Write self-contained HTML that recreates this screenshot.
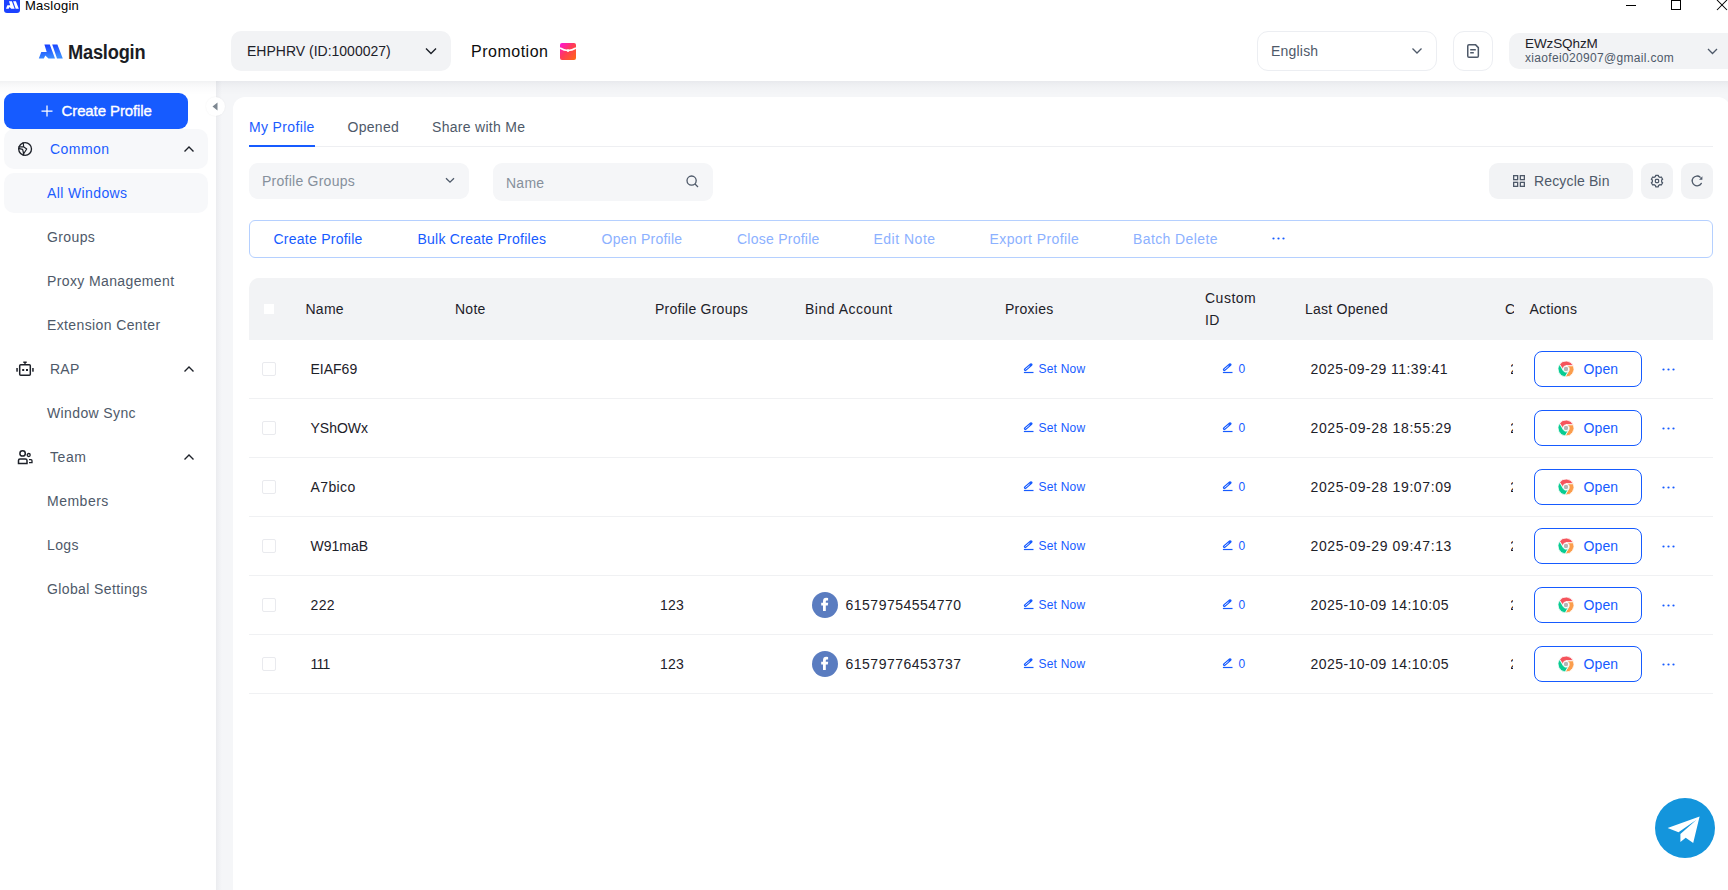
<!DOCTYPE html>
<html><head><meta charset="utf-8">
<style>
*{box-sizing:border-box;margin:0;padding:0}
html,body{width:1728px;height:890px;overflow:hidden;background:#fff;font-family:"Liberation Sans",sans-serif;color:#1d2129}
.a{position:absolute}
.t{position:absolute;white-space:nowrap;line-height:1}
svg{position:absolute;overflow:visible}
#content{left:216px;top:81px;width:1512px;height:809px;background:#f5f6f8}
#shl{left:216px;top:81px;width:6px;height:809px;background:linear-gradient(90deg,#ebecef 0px,#eff0f3 2px,rgba(245,246,248,0) 6px)}
#sht{left:0;top:81px;width:1728px;height:14px;background:linear-gradient(180deg,rgba(20,30,60,0.06) 0px,rgba(20,30,60,0.035) 3px,rgba(20,30,60,0.015) 7px,rgba(20,30,60,0) 14px)}
#card{left:233px;top:97px;width:1497px;height:820px;background:#fff;border-radius:12px}
#hdr{left:0;top:0;width:1728px;height:81px;background:#fff}
#side{left:0;top:81px;width:216px;height:809px;background:#fff}
.nav{position:absolute;left:4px;width:204px;height:40px;border-radius:10px}
.nav .t{font-size:14px;color:#4e5969;letter-spacing:0.25px}
.sel{background:#f7f8fa}
</style></head><body>
<div id="content" class="a"></div>
<div id="shl" class="a"></div>
<div id="side" class="a"></div>
<div id="hdr" class="a"></div>
<div id="card" class="a"></div>
<div id="sht" class="a"></div>

<!-- title bar -->
<div class="a" style="left:4px;top:-3px;width:16px;height:16px;border-radius:3px;background:#1c42ff"></div>
<svg style="left:0;top:0" width="24" height="14" viewBox="0 0 24 14"><g transform="translate(3.97,-1.25) scale(0.533)"><path d="M3.8 18.6 L6.3 12 L11.7 12 L9.4 4.6 L14.8 4.6 L20 18.6 L13.5 18.6 L10.3 15.6 L8.8 18.6 Z M17.2 4.6 L22.4 4.6 L27.8 18.6 L22 18.6 Z" fill="#fff"/></g></svg>
<div class="t" style="left:25px;top:-1px;font-size:13px;letter-spacing:0.25px;color:#000">Maslogin</div>
<div class="a" style="left:1626px;top:5px;width:10px;height:1px;background:#000"></div>
<div class="a" style="left:1671px;top:0px;width:10px;height:10px;border:1px solid #000"></div>
<svg style="left:1717px;top:-0.3px" width="11" height="11" viewBox="0 0 11 11"><path d="M0 0L10 10M10 0L0 10" stroke="#000" stroke-width="1.05"/></svg>

<!-- logo -->
<svg style="left:35px;top:40px" width="32" height="24" viewBox="0 0 32 24">
<defs><linearGradient id="lg" x1="0" y1="0" x2="0.3" y2="1"><stop offset="0" stop-color="#1436ff"/><stop offset="1" stop-color="#3a8cff"/></linearGradient></defs>
<path d="M3.8 18.6 L6.3 12 L11.7 12 L9.4 4.6 L14.8 4.6 L20 18.6 L13.5 18.6 L10.3 15.6 L8.8 18.6 Z M17.2 4.6 L22.4 4.6 L27.8 18.6 L22 18.6 Z" fill="url(#lg)"/></svg>
<div class="t" style="left:68px;top:42px;font-size:20px;font-weight:bold;letter-spacing:-0.2px;color:#1b1d24;transform:scaleX(0.91);transform-origin:0 0">Maslogin</div>

<!-- account dropdown -->
<div class="a" style="left:231px;top:31px;width:220px;height:40px;border-radius:10px;background:#f2f3f5"></div>
<div class="t" style="left:247px;top:44px;font-size:14px;color:#1d2129">EHPHRV (ID:1000027)</div>
<svg style="left:425px;top:47px" width="12" height="8" viewBox="0 0 12 8"><path d="M1 1.5L6 6.5L11 1.5" fill="none" stroke="#1d2129" stroke-width="1.4"/></svg>
<div class="t" style="left:471px;top:43.5px;font-size:16px;letter-spacing:0.5px;color:#0d0d0d">Promotion</div>
<svg style="left:560px;top:43px" width="16" height="17" viewBox="0 0 16 17">
<defs><linearGradient id="pg" x1="0" y1="0" x2="1" y2="1"><stop offset="0" stop-color="#ff10e0"/><stop offset="0.45" stop-color="#ff3a5a"/><stop offset="1" stop-color="#ff6a10"/></linearGradient></defs>
<rect x="0" y="0" width="16" height="17" rx="2" fill="url(#pg)"/><path d="M0 5 Q8 10 16 5" fill="none" stroke="#fff" stroke-width="1.6"/><circle cx="8" cy="7.6" r="1.3" fill="#fff"/></svg>

<!-- right header -->
<div class="a" style="left:1257px;top:31px;width:180px;height:40px;border-radius:11px;border:1px solid #eceef2"></div>
<div class="t" style="left:1271px;top:44px;font-size:14px;letter-spacing:0.2px;color:#4e5969">English</div>
<svg style="left:1411px;top:47px" width="12" height="8" viewBox="0 0 12 8"><path d="M1.5 1.5L6 6L10.5 1.5" fill="none" stroke="#4e5969" stroke-width="1.3"/></svg>
<div class="a" style="left:1453px;top:31px;width:40px;height:40px;border-radius:11px;border:1px solid #eceef2"></div>
<svg style="left:1466px;top:44px" width="14" height="15" viewBox="0 0 14 15"><path d="M1.75 2 Q1.75 0.65 3 0.65 H9.4 L12.35 3.6 V12.1 Q12.35 13.35 11.1 13.35 H3 Q1.75 13.35 1.75 12.1 Z" fill="none" stroke="#4e5969" stroke-width="1.5" stroke-linejoin="round"/><path d="M4.2 5.8H9.8 M4.2 8.7H7.8" stroke="#4e5969" stroke-width="1.6"/></svg>
<div class="a" style="left:1509px;top:33px;width:240px;height:36px;border-radius:10px;background:#f2f3f5"></div>
<div class="t" style="left:1525px;top:37.3px;font-size:13.5px;letter-spacing:-0.1px;color:#1d2129">EWzSQhzM</div>
<div class="t" style="left:1525px;top:51.5px;font-size:12px;letter-spacing:0.33px;color:#4e5969">xiaofei020907@gmail.com</div>
<svg style="left:1707px;top:48px" width="11" height="7" viewBox="0 0 11 7"><path d="M1 1L5.5 5.5L10 1" fill="none" stroke="#4e5969" stroke-width="1.3"/></svg>

<!-- sidebar -->
<div class="a" style="left:4px;top:93px;width:184px;height:36px;border-radius:9px;background:#165bff"></div>
<svg style="left:41px;top:105px" width="12" height="12" viewBox="0 0 12 12"><path d="M6 0.5V11.5M0.5 6H11.5" stroke="#fff" stroke-width="1.25"/></svg>
<div class="t" style="left:61.5px;top:103px;font-size:15px;color:#fff;letter-spacing:-0.1px;-webkit-text-stroke:0.35px #fff">Create Profile</div>
<div class="a" style="left:206px;top:97px;width:19px;height:19px;border-radius:50%;background:#fff;box-shadow:0 0 2px rgba(0,0,0,0.06)"></div>
<svg style="left:212px;top:101.5px" width="6" height="9" viewBox="0 0 6 9"><path d="M5.5 0.5V8.5L0.5 4.5Z" fill="#7d8791"/></svg>

<div class="nav sel" style="top:129px"></div>
<svg style="left:17px;top:141px" width="16" height="16" viewBox="0 0 16 16"><circle cx="8.1" cy="8" r="6.4" fill="none" stroke="#1d2129" stroke-width="1.35"/><path d="M6.1 1.2 L6.6 5.3 M1.2 6 L6.2 5.6 L9.7 8 L6.8 12.5 L6.3 14.6 M1.3 7.3 L5.6 8.3 L6.4 11.5 L6.3 14.6" fill="none" stroke="#1d2129" stroke-width="1.2" stroke-linejoin="round"/></svg>
<div class="t" style="left:50px;top:142px;font-size:14px;color:#1b5cff;letter-spacing:0.45px">Common</div>
<svg style="left:183px;top:145px" width="12" height="8" viewBox="0 0 12 8"><path d="M1.5 6.5L6 2L10.5 6.5" fill="none" stroke="#1d2129" stroke-width="1.4"/></svg>

<div class="nav sel" style="top:173px"></div>
<div class="t" style="left:47px;top:186px;font-size:14px;color:#1b5cff;letter-spacing:0.38px">All Windows</div>
<div class="t" style="left:47px;top:230px;font-size:14px;color:#4e5969;letter-spacing:0.38px">Groups</div>
<div class="t" style="left:47px;top:274px;font-size:14px;color:#4e5969;letter-spacing:0.38px">Proxy Management</div>
<div class="t" style="left:47px;top:318px;font-size:14px;color:#4e5969;letter-spacing:0.38px">Extension Center</div>
<svg style="left:15px;top:361px" width="20" height="16" viewBox="0 0 20 16"><rect x="4.7" y="3.8" width="10.6" height="10.4" rx="1" fill="none" stroke="#1d2129" stroke-width="1.5"/><path d="M8.3 1.2H11.7 M10 1.2V3.5" stroke="#1d2129" stroke-width="1.4"/><rect x="1.3" y="7" width="1.5" height="3.7" fill="#1d2129"/><rect x="17.2" y="7" width="1.5" height="3.7" fill="#1d2129"/><rect x="7.2" y="8" width="2" height="2" fill="#1d2129"/><rect x="11" y="8" width="2" height="2" fill="#1d2129"/></svg>
<div class="t" style="left:50px;top:362px;font-size:14px;color:#4e5969;letter-spacing:0.25px">RAP</div>
<svg style="left:183px;top:365px" width="12" height="8" viewBox="0 0 12 8"><path d="M1.5 6.5L6 2L10.5 6.5" fill="none" stroke="#1d2129" stroke-width="1.4"/></svg>
<div class="t" style="left:47px;top:406px;font-size:14px;color:#4e5969;letter-spacing:0.38px">Window Sync</div>
<svg style="left:15px;top:449px" width="20" height="16" viewBox="0 0 20 16"><circle cx="7.6" cy="4.4" r="2.7" fill="none" stroke="#1d2129" stroke-width="1.5"/><circle cx="13.7" cy="6" r="1.5" fill="none" stroke="#1d2129" stroke-width="1.3"/><path d="M3.5 14.6V11.5Q3.5 9.9 5 9.9H10.4Q12 9.9 12 11.5V14.6Z" fill="none" stroke="#1d2129" stroke-width="1.5"/><path d="M14 10.7H16Q17 10.7 17 11.8V13.6H14" fill="none" stroke="#1d2129" stroke-width="1.3"/></svg>
<div class="t" style="left:50px;top:450px;font-size:14px;color:#4e5969;letter-spacing:0.6px">Team</div>
<svg style="left:183px;top:453px" width="12" height="8" viewBox="0 0 12 8"><path d="M1.5 6.5L6 2L10.5 6.5" fill="none" stroke="#1d2129" stroke-width="1.4"/></svg>
<div class="t" style="left:47px;top:494px;font-size:14px;color:#4e5969;letter-spacing:0.5px">Members</div>
<div class="t" style="left:47px;top:538px;font-size:14px;color:#4e5969;letter-spacing:0.38px">Logs</div>
<div class="t" style="left:47px;top:582px;font-size:14px;color:#4e5969;letter-spacing:0.38px">Global Settings</div>

<!-- tabs -->
<div class="t" style="left:249px;top:120px;font-size:14px;color:#1b5cff;letter-spacing:0.35px">My Profile</div>
<div class="t" style="left:347.5px;top:120px;font-size:14px;color:#4e5969;letter-spacing:0.3px">Opened</div>
<div class="t" style="left:432px;top:120px;font-size:14px;color:#4e5969;letter-spacing:0.3px">Share with Me</div>
<div class="a" style="left:249px;top:146px;width:1464px;height:1px;background:#eeeff2"></div>
<div class="a" style="left:249px;top:145px;width:66px;height:2px;background:#165bff"></div>

<!-- filters -->
<div class="a" style="left:249px;top:163px;width:220px;height:36px;border-radius:9px;background:#f5f6f8"></div>
<div class="t" style="left:262px;top:174px;font-size:14px;color:#86909c;letter-spacing:0.25px">Profile Groups</div>
<svg style="left:445px;top:177px" width="10" height="7" viewBox="0 0 10 7"><path d="M1 1.2L5 5.2L9 1.2" fill="none" stroke="#4e5969" stroke-width="1.3"/></svg>
<div class="a" style="left:493px;top:163px;width:220px;height:38px;border-radius:9px;background:#f5f6f8"></div>
<div class="t" style="left:506px;top:175.5px;font-size:14px;color:#86909c;letter-spacing:0.25px">Name</div>
<svg style="left:686px;top:175px" width="13" height="13" viewBox="0 0 13 13"><circle cx="5.6" cy="5.6" r="4.6" fill="none" stroke="#4e5969" stroke-width="1.3"/><path d="M9 9L12 12" stroke="#4e5969" stroke-width="1.3"/></svg>

<div class="a" style="left:1489px;top:163px;width:144px;height:36px;border-radius:9px;background:#f2f3f5"></div>
<svg style="left:1513px;top:175px" width="12" height="12" viewBox="0 0 12 12"><g fill="none" stroke="#4e5969" stroke-width="1.3"><rect x="0.65" y="0.65" width="4" height="4"/><rect x="7.35" y="0.65" width="4" height="4"/><rect x="0.65" y="7.35" width="4" height="4"/><rect x="7.35" y="7.35" width="4" height="4"/></g></svg>
<div class="t" style="left:1534px;top:174px;font-size:14px;color:#4e5969;letter-spacing:0.15px">Recycle Bin</div>
<div class="a" style="left:1641px;top:163px;width:32px;height:36px;border-radius:9px;background:#f2f3f5"></div>
<svg style="left:1650px;top:174px" width="14" height="14" viewBox="0 0 14 14"><path d="M4.65 2.93 L5.47 2.56 L5.67 1.25 L8.33 1.25 L8.53 2.56 L9.35 2.93 L10.08 3.45 L11.31 2.98 L12.64 5.28 L11.61 6.10 L11.70 7.00 L11.61 7.90 L12.64 8.72 L11.31 11.02 L10.08 10.55 L9.35 11.07 L8.53 11.44 L8.33 12.75 L5.67 12.75 L5.47 11.44 L4.65 11.07 L3.92 10.55 L2.69 11.02 L1.36 8.72 L2.39 7.90 L2.30 7.00 L2.39 6.10 L1.36 5.28 L2.69 2.98 L3.92 3.45Z" fill="none" stroke="#4e5969" stroke-width="1.25" stroke-linejoin="round"/><rect x="5.4" y="5.4" width="3.2" height="3.2" rx="0.8" fill="none" stroke="#4e5969" stroke-width="1.25"/></svg>
<div class="a" style="left:1681px;top:163px;width:32px;height:36px;border-radius:9px;background:#f2f3f5"></div>
<svg style="left:1690px;top:174px" width="14" height="14" viewBox="0 0 14 14"><path d="M10.25 3.15 A4.9 4.9 0 1 0 11.34 9.35" fill="none" stroke="#4e5969" stroke-width="1.3" stroke-linecap="round"/><path d="M12.4 2.3 L12.4 5.7 L9.0 5.7Z" fill="#4e5969"/></svg>

<!-- toolbar -->
<div class="a" style="left:249px;top:220px;width:1464px;height:38px;border-radius:5px;border:1px solid #b5d0ff;border-radius:6px"></div>
<div class="t" style="left:273.5px;top:232px;font-size:14px;color:#165bff;letter-spacing:0.25px">Create Profile</div>
<div class="t" style="left:417.5px;top:232px;font-size:14px;color:#165bff;letter-spacing:0.25px">Bulk Create Profiles</div>
<div class="t" style="left:601.5px;top:232px;font-size:14px;color:#8cb1ff;letter-spacing:0.25px">Open Profile</div>
<div class="t" style="left:737px;top:232px;font-size:14px;color:#8cb1ff;letter-spacing:0.25px">Close Profile</div>
<div class="t" style="left:873.5px;top:232px;font-size:14px;color:#8cb1ff;letter-spacing:0.5px">Edit Note</div>
<div class="t" style="left:989.5px;top:232px;font-size:14px;color:#8cb1ff;letter-spacing:0.4px">Export Profile</div>
<div class="t" style="left:1133px;top:232px;font-size:14px;color:#8cb1ff;letter-spacing:0.4px">Batch Delete</div>
<svg style="left:1272px;top:237px" width="13" height="3" viewBox="0 0 13 3"><circle cx="1.5" cy="1.5" r="1.1" fill="#165bff"/><circle cx="6.5" cy="1.5" r="1.1" fill="#165bff"/><circle cx="11.5" cy="1.5" r="1.1" fill="#165bff"/></svg>

<!-- table header -->
<div class="a" style="left:249px;top:278px;width:1464px;height:62px;border-radius:10px 10px 0 0;background:#f2f3f5"></div>
<div class="a" style="left:264px;top:304px;width:10px;height:10px;background:#fff"></div>
<div class="t" style="left:305.5px;top:302.35px;font-size:14px;color:#1d2129;letter-spacing:0.25px">Name</div>
<div class="t" style="left:455px;top:302.35px;font-size:14px;color:#1d2129;letter-spacing:0.25px">Note</div>
<div class="t" style="left:655px;top:302.35px;font-size:14px;color:#1d2129;letter-spacing:0.25px">Profile Groups</div>
<div class="t" style="left:805px;top:302.35px;font-size:14px;color:#1d2129;letter-spacing:0.5px">Bind Account</div>
<div class="t" style="left:1005px;top:302.35px;font-size:14px;color:#1d2129;letter-spacing:0.25px">Proxies</div>
<div class="t" style="left:1305px;top:302.35px;font-size:14px;color:#1d2129;letter-spacing:0.25px">Last Opened</div>
<div class="t" style="left:1529.5px;top:302.35px;font-size:14px;color:#1d2129;letter-spacing:0.25px">Actions</div>
<div class="t" style="left:1205px;top:290.8px;font-size:14px;color:#1d2129;letter-spacing:0.5px">Custom</div>
<div class="t" style="left:1205px;top:313px;font-size:14px;color:#1d2129;letter-spacing:0.25px">ID</div>
<div class="a" style="left:1504px;top:290px;width:10px;height:30px;overflow:hidden"><div class="t" style="left:1px;top:12.35px;font-size:14px;color:#1d2129;letter-spacing:0.25px">C</div>
</div>
<div class="a" style="left:249px;top:398px;width:1464px;height:1px;background:#f0f1f3"></div>
<div class="a" style="left:262px;top:362px;width:14px;height:14px;border-radius:2px;border:1px solid #e9eaee;background:#fff"></div>
<div class="t" style="left:310.5px;top:362.05px;font-size:14px;color:#1d2129;letter-spacing:0px">EIAF69</div>
<svg style="left:1022.5px;top:363px" width="11" height="11" viewBox="0 0 11 11"><path d="M2.3 6.6 L8.1 1.7" stroke="#165bff" stroke-width="2.9" stroke-linecap="round"/><path d="M2.4 6.5 L6.6 3" stroke="#fff" stroke-width="0.9"/><path d="M0.9 9.5 H10.5" stroke="#165bff" stroke-width="1.2"/></svg>
<div class="t" style="left:1038.5px;top:362.64px;font-size:12px;color:#165bff;letter-spacing:0.2px">Set Now</div>
<svg style="left:1222px;top:363px" width="11" height="11" viewBox="0 0 11 11"><path d="M2.3 6.6 L8.1 1.7" stroke="#165bff" stroke-width="2.9" stroke-linecap="round"/><path d="M2.4 6.5 L6.6 3" stroke="#fff" stroke-width="0.9"/><path d="M0.9 9.5 H10.5" stroke="#165bff" stroke-width="1.2"/></svg>
<div class="t" style="left:1238.5px;top:362.64px;font-size:12px;color:#165bff;letter-spacing:0px">0</div>
<div class="t" style="left:1310.5px;top:362.05px;font-size:14px;color:#1d2129;letter-spacing:0.45px">2025-09-29 11:39:41</div>
<div class="a" style="left:1510.8px;top:359px;width:2.2px;height:20px;overflow:hidden"><div class="t" style="left:-0.8px;top:3.05px;font-size:14px;color:#1d2129;letter-spacing:0.25px">2</div>
</div>
<div class="a" style="left:1534px;top:351px;width:108px;height:36px;border-radius:8px;border:1px solid #165bff;background:#fff"></div>
<svg style="left:1558px;top:361px" width="16" height="16" viewBox="0 0 16 16"><g stroke="#fff" stroke-width="0.8"><path d="M1.562 3.251 A8 8 0 0 1 15.332 4.797 L8 4.8 A3.2 3.2 0 0 0 5.229 9.6 Z" fill="#f5545c"/><path d="M15.332 4.797 A8 8 0 0 1 7.108 15.95 L10.771 9.6 A3.2 3.2 0 0 0 8 4.8 Z" fill="#fb9d4c"/><path d="M7.108 15.95 A8 8 0 0 1 1.562 3.251 L5.229 9.6 A3.2 3.2 0 0 0 10.771 9.6 Z" fill="#08cc92"/></g><circle cx="8" cy="8" r="2.2" fill="#b5b5b5"/></svg>
<div class="t" style="left:1583.5px;top:362.05px;font-size:14px;color:#165bff;letter-spacing:0.1px">Open</div>
<svg style="left:1661.5px;top:367.5px" width="13" height="3" viewBox="0 0 13 3"><circle cx="1.5" cy="1.5" r="1.1" fill="#165bff"/><circle cx="6.5" cy="1.5" r="1.1" fill="#165bff"/><circle cx="11.5" cy="1.5" r="1.1" fill="#165bff"/></svg>
<div class="a" style="left:249px;top:457px;width:1464px;height:1px;background:#f0f1f3"></div>
<div class="a" style="left:262px;top:421px;width:14px;height:14px;border-radius:2px;border:1px solid #e9eaee;background:#fff"></div>
<div class="t" style="left:310.5px;top:421.05px;font-size:14px;color:#1d2129;letter-spacing:0px">YShOWx</div>
<svg style="left:1022.5px;top:422px" width="11" height="11" viewBox="0 0 11 11"><path d="M2.3 6.6 L8.1 1.7" stroke="#165bff" stroke-width="2.9" stroke-linecap="round"/><path d="M2.4 6.5 L6.6 3" stroke="#fff" stroke-width="0.9"/><path d="M0.9 9.5 H10.5" stroke="#165bff" stroke-width="1.2"/></svg>
<div class="t" style="left:1038.5px;top:421.64px;font-size:12px;color:#165bff;letter-spacing:0.2px">Set Now</div>
<svg style="left:1222px;top:422px" width="11" height="11" viewBox="0 0 11 11"><path d="M2.3 6.6 L8.1 1.7" stroke="#165bff" stroke-width="2.9" stroke-linecap="round"/><path d="M2.4 6.5 L6.6 3" stroke="#fff" stroke-width="0.9"/><path d="M0.9 9.5 H10.5" stroke="#165bff" stroke-width="1.2"/></svg>
<div class="t" style="left:1238.5px;top:421.64px;font-size:12px;color:#165bff;letter-spacing:0px">0</div>
<div class="t" style="left:1310.5px;top:421.05px;font-size:14px;color:#1d2129;letter-spacing:0.6px">2025-09-28 18:55:29</div>
<div class="a" style="left:1510.8px;top:418px;width:2.2px;height:20px;overflow:hidden"><div class="t" style="left:-0.8px;top:3.05px;font-size:14px;color:#1d2129;letter-spacing:0.25px">2</div>
</div>
<div class="a" style="left:1534px;top:410px;width:108px;height:36px;border-radius:8px;border:1px solid #165bff;background:#fff"></div>
<svg style="left:1558px;top:420px" width="16" height="16" viewBox="0 0 16 16"><g stroke="#fff" stroke-width="0.8"><path d="M1.562 3.251 A8 8 0 0 1 15.332 4.797 L8 4.8 A3.2 3.2 0 0 0 5.229 9.6 Z" fill="#f5545c"/><path d="M15.332 4.797 A8 8 0 0 1 7.108 15.95 L10.771 9.6 A3.2 3.2 0 0 0 8 4.8 Z" fill="#fb9d4c"/><path d="M7.108 15.95 A8 8 0 0 1 1.562 3.251 L5.229 9.6 A3.2 3.2 0 0 0 10.771 9.6 Z" fill="#08cc92"/></g><circle cx="8" cy="8" r="2.2" fill="#b5b5b5"/></svg>
<div class="t" style="left:1583.5px;top:421.05px;font-size:14px;color:#165bff;letter-spacing:0.1px">Open</div>
<svg style="left:1661.5px;top:426.5px" width="13" height="3" viewBox="0 0 13 3"><circle cx="1.5" cy="1.5" r="1.1" fill="#165bff"/><circle cx="6.5" cy="1.5" r="1.1" fill="#165bff"/><circle cx="11.5" cy="1.5" r="1.1" fill="#165bff"/></svg>
<div class="a" style="left:249px;top:516px;width:1464px;height:1px;background:#f0f1f3"></div>
<div class="a" style="left:262px;top:480px;width:14px;height:14px;border-radius:2px;border:1px solid #e9eaee;background:#fff"></div>
<div class="t" style="left:310.5px;top:480.05px;font-size:14px;color:#1d2129;letter-spacing:0.4px">A7bico</div>
<svg style="left:1022.5px;top:481px" width="11" height="11" viewBox="0 0 11 11"><path d="M2.3 6.6 L8.1 1.7" stroke="#165bff" stroke-width="2.9" stroke-linecap="round"/><path d="M2.4 6.5 L6.6 3" stroke="#fff" stroke-width="0.9"/><path d="M0.9 9.5 H10.5" stroke="#165bff" stroke-width="1.2"/></svg>
<div class="t" style="left:1038.5px;top:480.64px;font-size:12px;color:#165bff;letter-spacing:0.2px">Set Now</div>
<svg style="left:1222px;top:481px" width="11" height="11" viewBox="0 0 11 11"><path d="M2.3 6.6 L8.1 1.7" stroke="#165bff" stroke-width="2.9" stroke-linecap="round"/><path d="M2.4 6.5 L6.6 3" stroke="#fff" stroke-width="0.9"/><path d="M0.9 9.5 H10.5" stroke="#165bff" stroke-width="1.2"/></svg>
<div class="t" style="left:1238.5px;top:480.64px;font-size:12px;color:#165bff;letter-spacing:0px">0</div>
<div class="t" style="left:1310.5px;top:480.05px;font-size:14px;color:#1d2129;letter-spacing:0.6px">2025-09-28 19:07:09</div>
<div class="a" style="left:1510.8px;top:477px;width:2.2px;height:20px;overflow:hidden"><div class="t" style="left:-0.8px;top:3.05px;font-size:14px;color:#1d2129;letter-spacing:0.25px">2</div>
</div>
<div class="a" style="left:1534px;top:469px;width:108px;height:36px;border-radius:8px;border:1px solid #165bff;background:#fff"></div>
<svg style="left:1558px;top:479px" width="16" height="16" viewBox="0 0 16 16"><g stroke="#fff" stroke-width="0.8"><path d="M1.562 3.251 A8 8 0 0 1 15.332 4.797 L8 4.8 A3.2 3.2 0 0 0 5.229 9.6 Z" fill="#f5545c"/><path d="M15.332 4.797 A8 8 0 0 1 7.108 15.95 L10.771 9.6 A3.2 3.2 0 0 0 8 4.8 Z" fill="#fb9d4c"/><path d="M7.108 15.95 A8 8 0 0 1 1.562 3.251 L5.229 9.6 A3.2 3.2 0 0 0 10.771 9.6 Z" fill="#08cc92"/></g><circle cx="8" cy="8" r="2.2" fill="#b5b5b5"/></svg>
<div class="t" style="left:1583.5px;top:480.05px;font-size:14px;color:#165bff;letter-spacing:0.1px">Open</div>
<svg style="left:1661.5px;top:485.5px" width="13" height="3" viewBox="0 0 13 3"><circle cx="1.5" cy="1.5" r="1.1" fill="#165bff"/><circle cx="6.5" cy="1.5" r="1.1" fill="#165bff"/><circle cx="11.5" cy="1.5" r="1.1" fill="#165bff"/></svg>
<div class="a" style="left:249px;top:575px;width:1464px;height:1px;background:#f0f1f3"></div>
<div class="a" style="left:262px;top:539px;width:14px;height:14px;border-radius:2px;border:1px solid #e9eaee;background:#fff"></div>
<div class="t" style="left:310.5px;top:539.05px;font-size:14px;color:#1d2129;letter-spacing:0px">W91maB</div>
<svg style="left:1022.5px;top:540px" width="11" height="11" viewBox="0 0 11 11"><path d="M2.3 6.6 L8.1 1.7" stroke="#165bff" stroke-width="2.9" stroke-linecap="round"/><path d="M2.4 6.5 L6.6 3" stroke="#fff" stroke-width="0.9"/><path d="M0.9 9.5 H10.5" stroke="#165bff" stroke-width="1.2"/></svg>
<div class="t" style="left:1038.5px;top:539.64px;font-size:12px;color:#165bff;letter-spacing:0.2px">Set Now</div>
<svg style="left:1222px;top:540px" width="11" height="11" viewBox="0 0 11 11"><path d="M2.3 6.6 L8.1 1.7" stroke="#165bff" stroke-width="2.9" stroke-linecap="round"/><path d="M2.4 6.5 L6.6 3" stroke="#fff" stroke-width="0.9"/><path d="M0.9 9.5 H10.5" stroke="#165bff" stroke-width="1.2"/></svg>
<div class="t" style="left:1238.5px;top:539.64px;font-size:12px;color:#165bff;letter-spacing:0px">0</div>
<div class="t" style="left:1310.5px;top:539.05px;font-size:14px;color:#1d2129;letter-spacing:0.6px">2025-09-29 09:47:13</div>
<div class="a" style="left:1510.8px;top:536px;width:2.2px;height:20px;overflow:hidden"><div class="t" style="left:-0.8px;top:3.05px;font-size:14px;color:#1d2129;letter-spacing:0.25px">2</div>
</div>
<div class="a" style="left:1534px;top:528px;width:108px;height:36px;border-radius:8px;border:1px solid #165bff;background:#fff"></div>
<svg style="left:1558px;top:538px" width="16" height="16" viewBox="0 0 16 16"><g stroke="#fff" stroke-width="0.8"><path d="M1.562 3.251 A8 8 0 0 1 15.332 4.797 L8 4.8 A3.2 3.2 0 0 0 5.229 9.6 Z" fill="#f5545c"/><path d="M15.332 4.797 A8 8 0 0 1 7.108 15.95 L10.771 9.6 A3.2 3.2 0 0 0 8 4.8 Z" fill="#fb9d4c"/><path d="M7.108 15.95 A8 8 0 0 1 1.562 3.251 L5.229 9.6 A3.2 3.2 0 0 0 10.771 9.6 Z" fill="#08cc92"/></g><circle cx="8" cy="8" r="2.2" fill="#b5b5b5"/></svg>
<div class="t" style="left:1583.5px;top:539.05px;font-size:14px;color:#165bff;letter-spacing:0.1px">Open</div>
<svg style="left:1661.5px;top:544.5px" width="13" height="3" viewBox="0 0 13 3"><circle cx="1.5" cy="1.5" r="1.1" fill="#165bff"/><circle cx="6.5" cy="1.5" r="1.1" fill="#165bff"/><circle cx="11.5" cy="1.5" r="1.1" fill="#165bff"/></svg>
<div class="a" style="left:249px;top:634px;width:1464px;height:1px;background:#f0f1f3"></div>
<div class="a" style="left:262px;top:598px;width:14px;height:14px;border-radius:2px;border:1px solid #e9eaee;background:#fff"></div>
<div class="t" style="left:310.5px;top:598.05px;font-size:14px;color:#1d2129;letter-spacing:0.4px">222</div>
<div class="t" style="left:660px;top:598.05px;font-size:14px;color:#1d2129;letter-spacing:0.25px">123</div>
<div class="a" style="left:812px;top:592px;width:26px;height:26px;border-radius:50%;background:#5a7cc0"></div>
<svg style="left:819px;top:596px" width="12" height="18" viewBox="0 0 12 18"><path d="M4 15 V9.6 H2.2 V6.8 H4 V5.2 Q4 1.8 7.2 1.8 Q8.3 1.8 9.1 2 V4.5 H7.9 Q6.8 4.5 6.8 5.5 V6.8 H9.2 L8.8 9.6 H6.8 V15Z" fill="#fff"/></svg>
<div class="t" style="left:845.5px;top:598.05px;font-size:14px;color:#1d2129;letter-spacing:0.5px">61579754554770</div>
<svg style="left:1022.5px;top:599px" width="11" height="11" viewBox="0 0 11 11"><path d="M2.3 6.6 L8.1 1.7" stroke="#165bff" stroke-width="2.9" stroke-linecap="round"/><path d="M2.4 6.5 L6.6 3" stroke="#fff" stroke-width="0.9"/><path d="M0.9 9.5 H10.5" stroke="#165bff" stroke-width="1.2"/></svg>
<div class="t" style="left:1038.5px;top:598.64px;font-size:12px;color:#165bff;letter-spacing:0.2px">Set Now</div>
<svg style="left:1222px;top:599px" width="11" height="11" viewBox="0 0 11 11"><path d="M2.3 6.6 L8.1 1.7" stroke="#165bff" stroke-width="2.9" stroke-linecap="round"/><path d="M2.4 6.5 L6.6 3" stroke="#fff" stroke-width="0.9"/><path d="M0.9 9.5 H10.5" stroke="#165bff" stroke-width="1.2"/></svg>
<div class="t" style="left:1238.5px;top:598.64px;font-size:12px;color:#165bff;letter-spacing:0px">0</div>
<div class="t" style="left:1310.5px;top:598.05px;font-size:14px;color:#1d2129;letter-spacing:0.45px">2025-10-09 14:10:05</div>
<div class="a" style="left:1510.8px;top:595px;width:2.2px;height:20px;overflow:hidden"><div class="t" style="left:-0.8px;top:3.05px;font-size:14px;color:#1d2129;letter-spacing:0.25px">2</div>
</div>
<div class="a" style="left:1534px;top:587px;width:108px;height:36px;border-radius:8px;border:1px solid #165bff;background:#fff"></div>
<svg style="left:1558px;top:597px" width="16" height="16" viewBox="0 0 16 16"><g stroke="#fff" stroke-width="0.8"><path d="M1.562 3.251 A8 8 0 0 1 15.332 4.797 L8 4.8 A3.2 3.2 0 0 0 5.229 9.6 Z" fill="#f5545c"/><path d="M15.332 4.797 A8 8 0 0 1 7.108 15.95 L10.771 9.6 A3.2 3.2 0 0 0 8 4.8 Z" fill="#fb9d4c"/><path d="M7.108 15.95 A8 8 0 0 1 1.562 3.251 L5.229 9.6 A3.2 3.2 0 0 0 10.771 9.6 Z" fill="#08cc92"/></g><circle cx="8" cy="8" r="2.2" fill="#b5b5b5"/></svg>
<div class="t" style="left:1583.5px;top:598.05px;font-size:14px;color:#165bff;letter-spacing:0.1px">Open</div>
<svg style="left:1661.5px;top:603.5px" width="13" height="3" viewBox="0 0 13 3"><circle cx="1.5" cy="1.5" r="1.1" fill="#165bff"/><circle cx="6.5" cy="1.5" r="1.1" fill="#165bff"/><circle cx="11.5" cy="1.5" r="1.1" fill="#165bff"/></svg>
<div class="a" style="left:249px;top:693px;width:1464px;height:1px;background:#f0f1f3"></div>
<div class="a" style="left:262px;top:657px;width:14px;height:14px;border-radius:2px;border:1px solid #e9eaee;background:#fff"></div>
<div class="t" style="left:310.5px;top:657.05px;font-size:14px;color:#1d2129;letter-spacing:-0.7px">111</div>
<div class="t" style="left:660px;top:657.05px;font-size:14px;color:#1d2129;letter-spacing:0.25px">123</div>
<div class="a" style="left:812px;top:651px;width:26px;height:26px;border-radius:50%;background:#5a7cc0"></div>
<svg style="left:819px;top:655px" width="12" height="18" viewBox="0 0 12 18"><path d="M4 15 V9.6 H2.2 V6.8 H4 V5.2 Q4 1.8 7.2 1.8 Q8.3 1.8 9.1 2 V4.5 H7.9 Q6.8 4.5 6.8 5.5 V6.8 H9.2 L8.8 9.6 H6.8 V15Z" fill="#fff"/></svg>
<div class="t" style="left:845.5px;top:657.05px;font-size:14px;color:#1d2129;letter-spacing:0.5px">61579776453737</div>
<svg style="left:1022.5px;top:658px" width="11" height="11" viewBox="0 0 11 11"><path d="M2.3 6.6 L8.1 1.7" stroke="#165bff" stroke-width="2.9" stroke-linecap="round"/><path d="M2.4 6.5 L6.6 3" stroke="#fff" stroke-width="0.9"/><path d="M0.9 9.5 H10.5" stroke="#165bff" stroke-width="1.2"/></svg>
<div class="t" style="left:1038.5px;top:657.64px;font-size:12px;color:#165bff;letter-spacing:0.2px">Set Now</div>
<svg style="left:1222px;top:658px" width="11" height="11" viewBox="0 0 11 11"><path d="M2.3 6.6 L8.1 1.7" stroke="#165bff" stroke-width="2.9" stroke-linecap="round"/><path d="M2.4 6.5 L6.6 3" stroke="#fff" stroke-width="0.9"/><path d="M0.9 9.5 H10.5" stroke="#165bff" stroke-width="1.2"/></svg>
<div class="t" style="left:1238.5px;top:657.64px;font-size:12px;color:#165bff;letter-spacing:0px">0</div>
<div class="t" style="left:1310.5px;top:657.05px;font-size:14px;color:#1d2129;letter-spacing:0.45px">2025-10-09 14:10:05</div>
<div class="a" style="left:1510.8px;top:654px;width:2.2px;height:20px;overflow:hidden"><div class="t" style="left:-0.8px;top:3.05px;font-size:14px;color:#1d2129;letter-spacing:0.25px">2</div>
</div>
<div class="a" style="left:1534px;top:646px;width:108px;height:36px;border-radius:8px;border:1px solid #165bff;background:#fff"></div>
<svg style="left:1558px;top:656px" width="16" height="16" viewBox="0 0 16 16"><g stroke="#fff" stroke-width="0.8"><path d="M1.562 3.251 A8 8 0 0 1 15.332 4.797 L8 4.8 A3.2 3.2 0 0 0 5.229 9.6 Z" fill="#f5545c"/><path d="M15.332 4.797 A8 8 0 0 1 7.108 15.95 L10.771 9.6 A3.2 3.2 0 0 0 8 4.8 Z" fill="#fb9d4c"/><path d="M7.108 15.95 A8 8 0 0 1 1.562 3.251 L5.229 9.6 A3.2 3.2 0 0 0 10.771 9.6 Z" fill="#08cc92"/></g><circle cx="8" cy="8" r="2.2" fill="#b5b5b5"/></svg>
<div class="t" style="left:1583.5px;top:657.05px;font-size:14px;color:#165bff;letter-spacing:0.1px">Open</div>
<svg style="left:1661.5px;top:662.5px" width="13" height="3" viewBox="0 0 13 3"><circle cx="1.5" cy="1.5" r="1.1" fill="#165bff"/><circle cx="6.5" cy="1.5" r="1.1" fill="#165bff"/><circle cx="11.5" cy="1.5" r="1.1" fill="#165bff"/></svg>

<!-- telegram -->
<div class="a" style="left:1655px;top:798px;width:60px;height:60px;border-radius:50%;background:#1495dc"></div>
<svg style="left:1655px;top:798px" width="60" height="60" viewBox="0 0 60 60"><path d="M12.6 30.1 L44.6 18.4 L38.2 45 L30.7 39.7 L25.4 44 L25.4 36 L41.5 21.8 L23.5 34.2 Z" fill="#fff"/></svg>
</body></html>
